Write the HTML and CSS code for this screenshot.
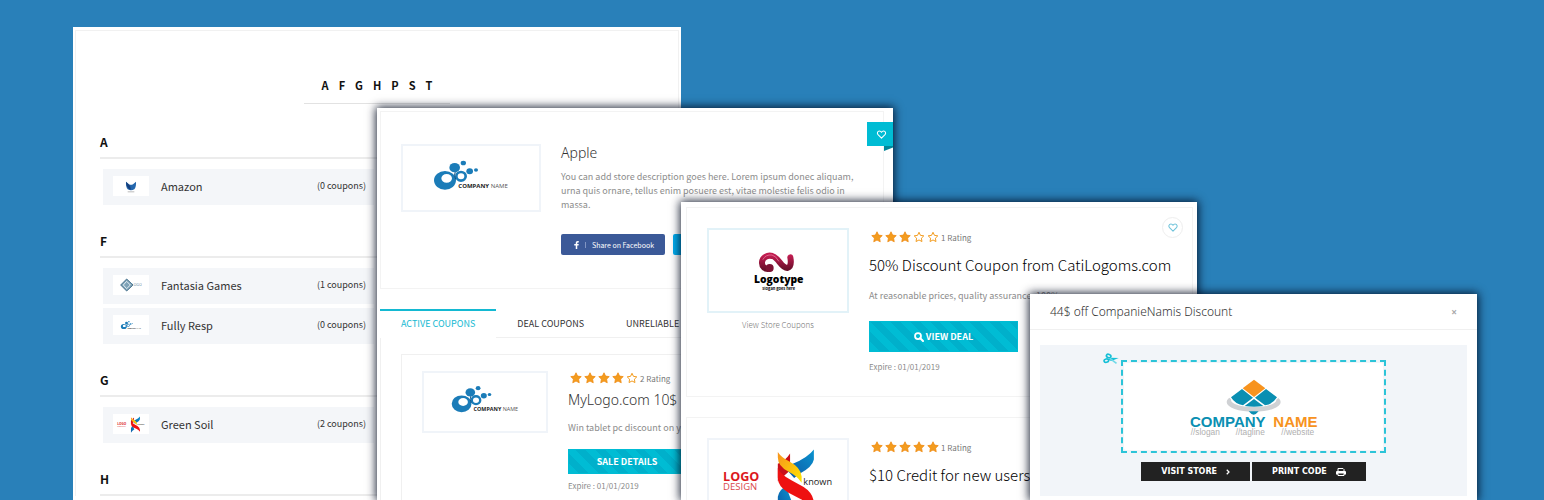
FILE: index.html
```html
<!DOCTYPE html>
<html lang="en">
<head>
<meta charset="utf-8">
<title>Coupon stores</title>
<link rel="stylesheet" href="styles.css">
</head>
<body>
<svg class="sprite" aria-hidden="true">
  <defs>
    <linearGradient id="g-swirl" x1="0" y1="0" x2="0" y2="1"><stop offset="0" stop-color="#c01c50"/><stop offset="1" stop-color="#6b0f2b"/></linearGradient>
    <linearGradient id="g-gold" x1="0" y1="0" x2="1" y2="1"><stop offset="0" stop-color="#f7931e"/><stop offset="1" stop-color="#ffe600"/></linearGradient>
    <linearGradient id="g-blue" x1="1" y1="0" x2="0" y2="1"><stop offset="0" stop-color="#0a94cf"/><stop offset="1" stop-color="#0c56a4"/></linearGradient>
  </defs>
  <symbol id="star" viewBox="0 0 24 24"><path d="M12 1.500l3.200 6.700 7.300 1-5.300 5.100 1.300 7.300L12 18.100l-6.500 3.500 1.300-7.300L1.500 9.200l7.300-1z" fill="#f39c1f" stroke="#ef8a12" stroke-width="1.500" stroke-linejoin="round"/></symbol>
  <symbol id="star-o" viewBox="0 0 24 24"><path d="M12 2.500l2.900 6.200 6.700 1-4.800 4.700 1.100 6.700L12 17.900l-5.900 3.200 1.100-6.700L2.400 9.700l6.700-1z" fill="none" stroke="#f39c1f" stroke-width="2" stroke-linejoin="round"/></symbol>
  <symbol id="heart" viewBox="0 0 24 22"><path d="M12 20L3.500 11.500C.5 8 2 2.500 7 2.500c2.500 0 4 1.500 5 3.200 1-1.700 2.500-3.200 5-3.200 5 0 6.500 5.500 3.500 9z" fill="none" stroke="currentColor" stroke-width="2.600" stroke-linejoin="round"/></symbol>
  <symbol id="bubbles" viewBox="165 175 240 100">
    <path fill="#1b7cb8" fill-rule="evenodd" d="M174 241a33 28 0 1 0 66 0a33 28 0 1 0-66 0zM196 235a16 13 0 1 1 32 0a16 13 0 1 1-32 0z"/>
    <ellipse cx="255" cy="229" rx="14" ry="13" fill="none" stroke="#1b7cb8" stroke-width="8"/>
    <path d="M238 214q-5 11 1 24" fill="none" stroke="#0d4f82" stroke-width="3"/>
    <ellipse cx="236" cy="203" rx="16" ry="14" fill="#1b7cb8"/>
    <ellipse cx="262" cy="189" rx="8" ry="7" fill="#1b7cb8"/>
    <ellipse cx="281" cy="214" rx="10" ry="9" fill="#1b7cb8"/>
    <ellipse cx="300" cy="210" rx="6" ry="5" fill="#1b7cb8"/>
    <text x="247" y="265" font-size="18" fill="#222"><tspan font-weight="700">COMPANY</tspan> <tspan fill="#555">NAME</tspan></text>
  </symbol>
  <symbol id="known" viewBox="145 200 335 200">
    <path d="M348 219v50l-36 32v-52q22-8 36-30z" fill="#c9101a"/>
    <path d="M418 207v30q-4 22-42 42l-16 12-24-26 20-16q44-18 62-42z" fill="url(#g-blue)"/>
    <path d="M312 215q10 16 34 28 34 18 36 44v18q-14-20-38-32-32-16-32-42z" fill="url(#g-gold)"/>
    <path d="M312 398v-52q4-22 24-30l16 42q-24 10-40 40z" fill="url(#g-blue)"/>
    <path d="M312 262q8 20 40 36l36 20q28 18 30 46v22q-12-20-38-32l-38-20q-30-18-30-44z" fill="#ee1111"/>
    <text x="151" y="300" font-size="37" font-weight="700" fill="#dc1820">LOGO</text>
    <text x="151" y="325" font-size="28" fill="#d9484c">DESIGN</text>
    <text x="387" y="311" font-size="27" fill="#222">known</text>
  </symbol>
  <symbol id="diamonds" viewBox="40 35 390 180">
    <path fill="#cfd1d4" fill-rule="evenodd" d="M153 110a80 29 0 1 0 162 0a80 29 0 1 0-162 0zM166 104a67 21 0 1 0 136 0a67 21 0 1 0-136 0z"/>
    <path fill="#fff" d="M235 38l76 57-20 18q-56 22-112 0l-20-18z"/>
    <path fill="#f7931e" d="M235 43l34 26-34 26-34-26z"/>
    <path fill="#0a8fb2" d="M199 71l33 26-30 23q-24-4-36-24zM271 71l33 25q-12 20-36 24l-30-23zM235 101l28 21q-28 5-56 0zM219 138h30q-8 10-15 10t-15-10z"/>
    <text x="43" y="185" font-size="45" font-weight="700" fill="#0a8fb2">COMPANY <tspan x="293" fill="#f7931e">NAME</tspan></text>
    <text x="45" y="209" font-size="25" fill="#b0b0b0">//slogan<tspan x="180">//tagline</tspan><tspan x="317">//website</tspan></text>
  </symbol>
</svg>

<main class="stage">
  <section class="panel panel-index">
    <div class="index-inner">
      <nav class="letters" aria-label="Letters"><a href="#a">A</a><a href="#f">F</a><a href="#g">G</a><a href="#h">H</a><a href="#p">P</a><a href="#s">S</a><a href="#t">T</a></nav>
      <section class="group" id="a">
        <h2>A</h2>
        <div class="stores">
          <a class="store" href="#amazon"><span class="thumb"><svg width="12" height="13" viewBox="0 0 36 38" aria-hidden="true"><path d="M3 5l9 7q6 3 12 0l9-7q1 17-5 22-10 6-20 0Q2 22 3 5z" fill="#2467ad"/><path d="M3 5l12 12 3 12q-14-2-15-24z" fill="#15407e"/><path d="M8 35h20" stroke="#bbb" stroke-width="3"/></svg></span><span class="name">Amazon</span><span class="count">(0 coupons)</span></a>
        </div>
      </section>
      <section class="group" id="f">
        <h2>F</h2>
        <div class="stores">
          <a class="store" href="#fantasia"><span class="thumb"><svg width="22" height="14" viewBox="0 0 66 42" aria-hidden="true"><path d="M20 3l19 18-19 18L2 21z" fill="#7fa3b8" stroke="#47718c" stroke-width="3"/><path d="M20 10l11 11-11 11L10 21z" fill="none" stroke="#e3edf3" stroke-width="3"/><text x="34" y="25" font-size="12" fill="#7a9bb0">LOGO</text></svg></span><span class="name">Fantasia Games</span><span class="count">(1 coupons)</span></a>
          <a class="store" href="#fully"><span class="thumb"><svg width="22" height="10" aria-hidden="true"><use href="#bubbles"/></svg></span><span class="name">Fully Resp</span><span class="count">(0 coupons)</span></a>
        </div>
      </section>
      <section class="group" id="g">
        <h2>G</h2>
        <div class="stores">
          <a class="store" href="#green"><span class="thumb"><svg width="30" height="17" aria-hidden="true"><use href="#known"/></svg></span><span class="name">Green Soil</span><span class="count">(2 coupons)</span></a>
        </div>
      </section>
      <section class="group" id="h"><h2>H</h2></section>
    </div>
  </section>

  <section class="panel panel-store">
    <button class="ribbon" aria-label="Favourite"><svg width="11" height="9" aria-hidden="true"><use href="#heart"/></svg></button>
    <article class="store-card">
      <div class="logo-box logo-store"><svg width="80" height="34" role="img" aria-label="Company name"><use href="#bubbles"/></svg></div>
      <div class="store-info">
        <h1>Apple</h1>
        <p>You can add store description goes here. Lorem ipsum donec aliquam, urna quis ornare, tellus enim posuere est, vitae molestie felis odio in massa.</p>
        <div class="share">
          <button class="share-btn facebook"><svg width="5" height="8" viewBox="0 0 10 16" aria-hidden="true"><path d="M9.500 0v3H8C7 3 6.500 3.500 6.500 4.500V6h3L9 9H6.500v7h-3V9H.5V6h3V4C3.500 1.500 5 0 7.300 0z" fill="#fff"/></svg><i></i>Share on Facebook</button>
          <button class="share-btn twitter" aria-label="Twitter"></button>
        </div>
      </div>
    </article>
    <nav class="tabs"><a class="active" href="#active">ACTIVE COUPONS</a><a href="#deal">DEAL COUPONS</a><a href="#unreliable">UNRELIABLE</a></nav>
    <div class="tab-body">
      <article class="sale-card">
        <div class="logo-box logo-sale"><svg width="72" height="30" role="img" aria-label="Company name"><use href="#bubbles"/></svg></div>
        <div class="sale-info">
          <div class="rating"><svg><use href="#star"/></svg><svg><use href="#star"/></svg><svg><use href="#star"/></svg><svg><use href="#star"/></svg><svg><use href="#star-o"/></svg><span>2 Rating</span></div>
          <h2>MyLogo.com 10$</h2>
          <p>Win tablet pc discount on your</p>
          <button class="deal-btn">SALE DETAILS</button>
          <small>Expire : 01/01/2019</small>
        </div>
      </article>
    </div>
  </section>

  <section class="panel panel-deals">
    <article class="deal-card">
      <div class="deal-side">
        <div class="logo-box logo-deal tinted"><svg width="54" height="40" viewBox="235 155 160 120" role="img" aria-label="Logotype">
          <path d="M290 208C276 212 266 201 267 189C268 174 283 166 298 170C318 176 325 207 343 206C353 204 355 190 352 174" fill="none" stroke="url(#g-swirl)" stroke-width="18" stroke-linecap="round"/>
          <path d="M270 180q8-15 27-13 12 3 20 18" fill="none" stroke="#e0668c" stroke-width="3" stroke-linecap="round"/>
          <circle cx="290" cy="206" r="12" fill="#7b1233"/>
          <text class="heavy" x="243" y="251" font-size="31">Logotype</text>
          <text x="268" y="271" font-size="12" font-weight="700">slogan goes here</text></svg></div>
        <a class="view-store" href="#store">View Store Coupons</a>
      </div>
      <div class="deal-info">
        <div class="rating"><svg><use href="#star"/></svg><svg><use href="#star"/></svg><svg><use href="#star"/></svg><svg><use href="#star-o"/></svg><svg><use href="#star-o"/></svg><span>1 Rating</span></div>
        <h2>50% Discount Coupon from CatiLogoms.com</h2>
        <p>At reasonable prices, quality assurance, 100%</p>
        <button class="deal-btn"><svg width="10" height="10" viewBox="0 0 20 20" aria-hidden="true"><circle cx="8" cy="8" r="6" fill="none" stroke="#fff" stroke-width="3.500"/><path d="M12.500 12.500l5.500 5.500" stroke="#fff" stroke-width="4" stroke-linecap="round"/></svg>VIEW DEAL</button>
        <small>Expire : 01/01/2019</small>
      </div>
      <button class="like" aria-label="Favourite"><svg width="10" height="9" aria-hidden="true"><use href="#heart"/></svg></button>
    </article>
    <article class="deal-card">
      <div class="deal-side">
        <div class="logo-box logo-deal"><svg width="114" height="68" role="img" aria-label="Logo design"><use href="#known"/></svg></div>
      </div>
      <div class="deal-info">
        <div class="rating"><svg><use href="#star"/></svg><svg><use href="#star"/></svg><svg><use href="#star"/></svg><svg><use href="#star"/></svg><svg><use href="#star"/></svg><span>1 Rating</span></div>
        <h2>$10 Credit for new users</h2>
      </div>
    </article>
  </section>

  <section class="panel panel-modal">
    <header><h2>44$ off CompanieNamis Discount</h2><button class="close" aria-label="Close">×</button></header>
    <div class="voucher">
      <div class="ticket">
        <svg class="scissors" width="16" height="12" viewBox="0 0 48 34" aria-hidden="true"><g fill="none" stroke="#15bfd6" stroke-width="5"><ellipse cx="17" cy="8" rx="7" ry="5" transform="rotate(20 17 8)"/><ellipse cx="10" cy="22" rx="7" ry="5" transform="rotate(-12 10 22)"/></g><path d="M16 19l7-6 24 1-22 9z" fill="#15bfd6"/><path d="M22 13l20 15-3 4-20-15z" fill="#6fd9e8"/></svg>
        <div class="ticket-face"><svg width="130" height="60" role="img" aria-label="Company name"><use href="#diamonds"/></svg></div>
      </div>
      <div class="actions">
        <button>VISIT STORE<svg width="4" height="6" viewBox="0 0 8 12" aria-hidden="true"><path d="M1.500 1.500L6 6l-4.500 4.500" fill="none" stroke="#fff" stroke-width="2.500"/></svg></button>
        <button>PRINT CODE<svg width="10" height="8" viewBox="0 0 20 16" aria-hidden="true"><path d="M4 7V1h10l2 2v4" fill="none" stroke="#fff" stroke-width="2"/><path d="M2 6h16q2 0 2 2v5h-4v-2H4v2H0V8q0-2 2-2z" fill="#fff"/><path d="M4 11v4h12v-4" fill="none" stroke="#fff" stroke-width="2"/></svg></button>
      </div>
    </div>
  </section>
</main>
</body>
</html>
```
FILE: styles.css
```css
* { box-sizing: border-box; }
body, h1, h2, p { margin: 0; }
body {
  background: #2980b9;
  font-family: "Noto Sans CJK SC", "Noto Sans", sans-serif;
  color: #333;
}
a { color: inherit; text-decoration: none; }
button { font: inherit; border: 0; padding: 0; cursor: pointer; }
svg { display: block; flex: none; }
.sprite { position: absolute; width: 0; height: 0; }
#bubbles text, #known text { font-family: "Open Sans", sans-serif; }
#diamonds text { font-family: "Liberation Sans", sans-serif; }
.heavy { font-family: "Open Sans", sans-serif; font-weight: 800; }

/* Overlapping sheets share one grid */
.stage {
  display: grid;
  height: 100vh;
  overflow: hidden;
  grid-template-columns: 73fr 304fr 304fr 212fr 137fr 167fr 280fr 67fr;
  grid-template-rows: 27px 81px 94px 92px minmax(0, 1fr);
}
.panel { position: relative; min-width: 0; min-height: 0; background: #fff; }
.panel-index { grid-area: 2 / 2 / -1 / 4; overflow: hidden; padding: 3px 2px 0; }
.panel-store { grid-area: 3 / 3 / -1 / 5; }
.panel-deals { grid-area: 4 / 4 / -1 / 7; }
.panel-modal { grid-area: 5 / 6 / -1 / 8; }
.panel-store, .panel-deals, .panel-modal { box-shadow: 0 0 9px 1px rgba(0, 10, 30, .9); }

/* Store index */
.index-inner { border: 1px solid #f1f1f1; border-bottom: 0; padding: 44px 24px 0; }
.letters {
  display: flex;
  justify-content: center;
  gap: 10px;
  width: 146px;
  margin: 0 auto;
  padding-bottom: 8px;
  border-bottom: 1px solid #e2e2e2;
  font-size: 11px;
  line-height: 20px;
  font-weight: 700;
  color: #111;
}
.letters + .group { margin-top: 28px; }
.group { margin-bottom: 26px; }
.group h2 {
  padding-bottom: 5px;
  border-bottom: 2px solid #ececec;
  font-size: 12px;
  line-height: 20px;
  color: #111;
}
.stores {
  display: grid;
  grid-template-columns: 1fr 1fr;
  gap: 4px 6px;
  padding: 10px 3px 0;
}
.store {
  grid-column: 1;
  display: flex;
  align-items: center;
  gap: 12px;
  height: 36px;
  padding: 0 8px 2px 10px;
  background: #f4f6f9;
}
.thumb {
  display: flex;
  align-items: center;
  justify-content: center;
  width: 36px;
  height: 20px;
  background: #fff;
}
.name { flex: 1; font-size: 11px; line-height: 18px; }
.count { font-size: 9px; line-height: 18px; }

/* Store page */
.panel-store { padding: 3px 9px 0 3px; }
.logo-box {
  display: flex;
  align-items: center;
  justify-content: center;
  flex: none;
  border: 2px solid #f0f4f9;
}
.logo-box.tinted { border-color: #e2f2f8; }
.store-card {
  display: flex;
  align-items: flex-start;
  gap: 20px;
  height: 178px;
  padding: 32px 21px 0 20px;
  border: 1px solid #f3f3f3;
}
.logo-store { width: 140px; height: 68px; padding-bottom: 6px; }
.store-info h1 { font: 300 14px/18px "Noto Sans", sans-serif; }
.store-info p { margin-top: 8px; font-size: 9px; line-height: 14px; color: #8c8c8c; }
.share { display: flex; gap: 8px; margin-top: 22px; }
.share-btn {
  display: flex;
  align-items: center;
  height: 21px;
  border-radius: 2px;
  color: #fff;
  font-size: 7px;
}
.facebook { width: 104px; padding-left: 13px; background: #3b5998; }
.facebook i { width: 1px; height: 6px; margin: 0 6px; background: #8195c3; }
.twitter { width: 104px; background: #00aced; }
.ribbon {
  position: absolute;
  top: 14px;
  right: 0;
  display: flex;
  align-items: center;
  justify-content: center;
  width: 26px;
  height: 24px;
  padding-left: 3px;
  background: #00bcd4;
  color: #fff;
}
.ribbon::after {
  content: "";
  position: absolute;
  top: 100%;
  right: 0;
  width: 9px;
  height: 5px;
  background: #00879a;
  clip-path: polygon(0 0, 100% 0, 100% 30%, 0 100%);
}
.tabs {
  display: flex;
  margin-top: 20px;
  font-size: 9px;
  line-height: 26px;
  overflow: hidden;
}
.tabs a { padding: 2px 21px 0; border-bottom: 1px solid #f0f0f0; white-space: nowrap; }
.tabs a:last-child { flex: 1; }
.tabs .active { padding-top: 0; border-top: 2px solid #14b9d2; border-bottom-color: transparent; color: #14b9d2; }
.tab-body { padding: 16px 20px 0; border-left: 1px solid #f0f0f0; }
.sale-card {
  display: flex;
  align-items: flex-start;
  gap: 20px;
  height: 178px;
  padding: 16px 20px 0;
  border: 1px solid #f0f0f0;
}
.panel-store { clip-path: inset(-20px -20px 0 -20px); }
.logo-sale { width: 126px; height: 62px; padding-bottom: 6px; }
.sale-info { flex: 1; min-width: 0; }
.rating { display: flex; align-items: center; gap: 2px; height: 14px; padding-left: 2px; color: #777; }
.rating svg { width: 12px; height: 12px; }
.rating span { font-size: 8px; line-height: 14px; padding-top: 2px; }
.sale-info h2 { margin-top: 4px; font: 300 14px/22px "Noto Sans", sans-serif; white-space: nowrap; }
.sale-info p { margin-top: 10px; font-size: 9px; line-height: 14px; color: #8c8c8c; white-space: nowrap; }
.deal-btn {
  display: flex;
  align-items: center;
  justify-content: center;
  gap: 2px;
  color: #fff;
  font-weight: 700;
  border: 1px solid #00bcd4;
  background: repeating-linear-gradient(45deg, #00bcd4 0 7px, #00b0cb 7px 14px);
}
.sale-info .deal-btn { width: 118px; height: 25px; margin-top: 14px; font-size: 9px; }
small { display: block; color: #8c8c8c; }
.sale-info small { margin-top: 5px; font-size: 8px; line-height: 14px; }

/* Deals list */
.panel-deals { overflow: hidden; padding: 5px 4px 0 5px; }
.deal-card {
  position: relative;
  display: flex;
  align-items: flex-start;
  gap: 20px;
  height: 190px;
  margin-bottom: 20px;
  padding: 20px;
  border: 1px solid #f3f3f3;
}
.logo-deal { width: 142px; height: 85px; }
.view-store { display: block; margin-top: 4px; text-align: center; font-size: 8px; line-height: 16px; color: #777; font-weight: 300; }
.deal-info { flex: 1; min-width: 0; color: #222; }
.deal-info .rating { height: 18px; }
.deal-info h2 { margin-top: 7px; font-size: 15px; line-height: 24px; font-weight: 300; color: #000; white-space: nowrap; }
.deal-info p { margin-top: 11px; font-size: 9px; line-height: 16px; color: #8c8c8c; }
.deal-info .deal-btn { width: 149px; height: 31px; margin-top: 17px; font-size: 9px; }
.deal-info small { margin-top: 7px; font-size: 8px; line-height: 16px; }
.like {
  position: absolute;
  top: 9px;
  right: 9px;
  display: flex;
  align-items: center;
  justify-content: center;
  width: 21px;
  height: 21px;
  border: 1px solid #eee;
  border-radius: 50%;
  background: #fff;
  color: #6fc3da;
}

/* Print dialog */
.panel-modal header {
  display: flex;
  align-items: center;
  justify-content: space-between;
  height: 36px;
  padding: 0 20px;
  border-bottom: 1px solid #f0f0f0;
}
.panel-modal h2 { font: 300 12px/18px "Noto Sans", sans-serif; }
.close { background: none; color: #aaa; font: 700 10px/18px "Open Sans", sans-serif; }
.voucher {
  display: flex;
  flex-direction: column;
  align-items: center;
  margin: 15px 10px 0;
  padding: 15px 0;
  background: #f2f5f9;
}
.ticket {
  position: relative;
  width: 265px;
  padding: 1px;
  border: 2px dashed #2cc4d8;
}
.ticket-face {
  display: flex;
  align-items: center;
  justify-content: center;
  height: 87px;
  border-radius: 2px;
  background: #fff;
}
.scissors { position: absolute; top: -9px; left: -20px; }
.actions { display: flex; gap: 2px; margin-top: 9px; }
.actions button {
  display: flex;
  align-items: center;
  justify-content: center;
  gap: 9px;
  height: 19px;
  padding: 0 20px;
  background: #222;
  color: #fff;
  font: 700 8px "DejaVu Sans", sans-serif;
}
```
